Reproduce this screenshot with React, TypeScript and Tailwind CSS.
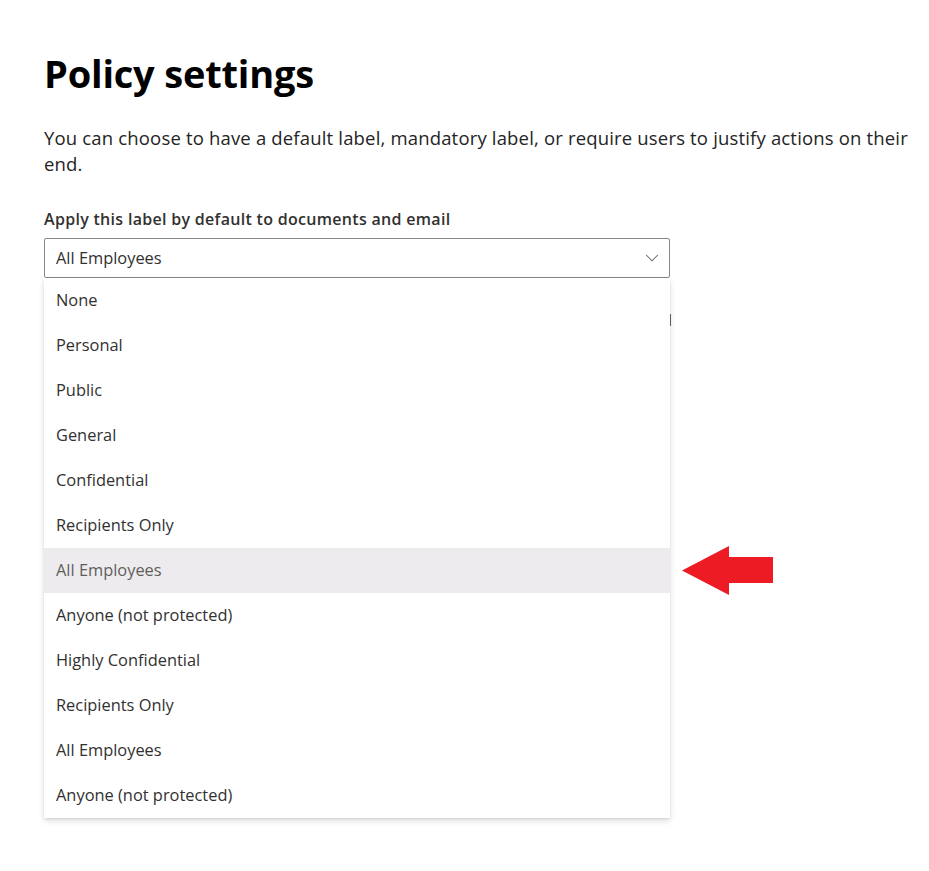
import { ChevronDown } from "lucide-react"

const options = [
  "None",
  "Personal",
  "Public",
  "General",
  "Confidential",
  "Recipients Only",
  "All Employees",
  "Anyone (not protected)",
  "Highly Confidential",
  "Recipients Only",
  "All Employees",
  "Anyone (not protected)",
]

export default function App() {
  return (
    <div className="min-h-[871px] bg-white pl-[44px] pt-[49px] text-[#323130] [font-family:'Open_Sans','Noto_Sans',sans-serif]">
      <h1 className="text-[38px] font-bold leading-[48px] tracking-[-0.2px] text-black">Policy settings</h1>

      <p className="mt-[28px] text-[18.5px] leading-[26px] tracking-[0.17px] text-[#242424]">
        You can choose to have a default label, mandatory label, or require users to justify actions on their
        <br />
        end.
      </p>

      <div className="mt-[32px] text-[16px] font-semibold leading-[20px] tracking-[0.3px] text-[#323130]">
        Apply this label by default to documents and email
      </div>

      <div className="relative mt-[9px] w-[626px]">
        <div className="flex h-[40px] items-center justify-between rounded-[2px] border border-[#8a8886] pl-[11px] pr-[6px]">
          <span className="text-[16.4px] text-[#323130]">All Employees</span>
          <ChevronDown className="h-[22px] w-[22px] text-[#605e5c]" strokeWidth={1.1} />
        </div>

        <div className="absolute left-[625px] top-[76px] h-[12px] w-[2px] bg-[#6b6355]" />

        <ul className="relative bg-white shadow-[0_3px_6px_rgba(0,0,0,0.13),0_1px_2px_rgba(0,0,0,0.08)]">
          {options.map((o, i) => (
            <li
              key={i}
              className={
                "flex h-[45px] items-center pl-[12px] text-[16.4px] " +
                (i === 6 ? "bg-[#edebee] text-[#605e5c]" : "text-[#323130]")
              }
            >
              {o}
            </li>
          ))}
        </ul>

        <svg className="absolute left-[638px] top-[308px]" width="92" height="50" viewBox="0 0 92 50">
          <polygon points="0,24.5 47,0 47,11 91,11 91,37 47,37 47,49" fill="#ed1c24" />
        </svg>
      </div>
    </div>
  )
}
